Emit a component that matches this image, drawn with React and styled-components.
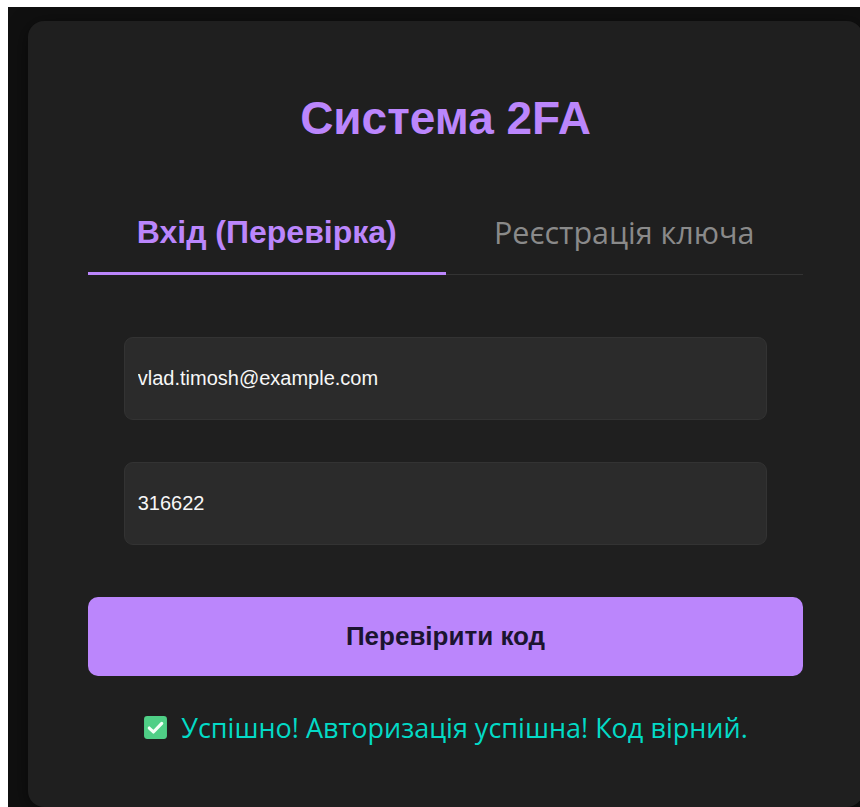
import React, { useState } from "react";
import styled, { createGlobalStyle } from "styled-components";

const GlobalStyle = createGlobalStyle`
  html, body {
    background: #ffffff;
  }
  body {
    margin: 7px 0 0 8px;
    overflow: hidden;
  }
  * {
    box-sizing: border-box;
  }
`;

const Backdrop = styled.div`
  background: #101010;
  min-height: 800px;
  padding: 14px 0 0 20px;
`;

const Card = styled.div`
  width: 835px;
  height: 786px;
  background: #1f1f1f;
  border-radius: 16px;
  box-shadow: 0 4px 20px rgba(0, 0, 0, 0.5);
  padding: 70px 60px 0;
  display: flex;
  flex-direction: column;
  align-items: center;
  font-family: "Liberation Sans", Arial, sans-serif;
`;

const Title = styled.h1`
  margin: 0;
  font-size: 46px;
  line-height: 55px;
  font-weight: 700;
  color: #bb86fc;
`;

const Tabs = styled.div`
  display: flex;
  width: 100%;
  margin-top: 56px;
  border-bottom: 1px solid #333;
`;

const Tab = styled.button`
  flex: 1;
  background: none;
  border: none;
  border-bottom: 3px solid ${(p) => (p.$active ? "#bb86fc" : "transparent")};
  margin-bottom: -1px;
  padding: 11px 0 21px;
  font-family: ${(p) =>
    p.$active ? '"Liberation Sans", Arial, sans-serif' : '"Open Sans", sans-serif'};
  font-size: ${(p) => (p.$active ? "32px" : "30.5px")};
  line-height: 38px;
  font-weight: ${(p) => (p.$active ? 700 : 400)};
  color: ${(p) => (p.$active ? "#bb86fc" : "#8a8a8a")};
  cursor: pointer;
`;

const Form = styled.form`
  width: 100%;
  margin-top: 62px;
  display: flex;
  flex-direction: column;
  align-items: center;
`;

const Input = styled.input`
  width: 90%;
  height: 83px;
  margin-bottom: ${(p) => p.$gap}px;
  padding: 0 13px;
  background: #2b2b2b;
  border: 1px solid #333;
  border-radius: 9px;
  color: #f7f7f7;
  font-family: "Liberation Sans", Arial, sans-serif;
  font-size: 20px;
  outline: none;
`;

const Submit = styled.button`
  width: 100%;
  height: 79px;
  border: none;
  border-radius: 10px;
  background: #bb86fc;
  color: #1b1430;
  font-family: "Liberation Sans", Arial, sans-serif;
  font-size: 26px;
  font-weight: 700;
  cursor: pointer;
`;

const Message = styled.div`
  margin-top: 33px;
  display: flex;
  align-items: center;
  gap: 13px;
  font-family: "Open Sans", sans-serif;
  font-size: 27px;
  color: #03dac6;
`;

const CheckBadge = () => (
  <svg width="25" height="25" viewBox="0 0 24 24">
    <rect x="1" y="1" width="22" height="22" rx="3" fill="#4fcf86" />
    <path
      d="M6 12.5l4 3.8 8-8.3"
      fill="none"
      stroke="#f2fff6"
      strokeWidth="3"
      strokeLinecap="round"
      strokeLinejoin="round"
    />
  </svg>
);

export default function App() {
  const [tab, setTab] = useState("login");

  return (
    <>
      <GlobalStyle />
      <Backdrop>
        <Card>
          <Title>Система 2FA</Title>
          <Tabs>
            <Tab $active={tab === "login"} onClick={() => setTab("login")}>
              Вхід (Перевірка)
            </Tab>
            <Tab $active={tab === "register"} onClick={() => setTab("register")}>
              Реєстрація ключа
            </Tab>
          </Tabs>
          <Form onSubmit={(e) => e.preventDefault()}>
            <Input $gap={42} type="email" defaultValue="vlad.timosh@example.com" />
            <Input $gap={52} type="text" defaultValue="316622" />
            <Submit type="submit">Перевірити код</Submit>
          </Form>
          <Message>
            <CheckBadge />
            Успішно! Авторизація успішна! Код вірний.
          </Message>
        </Card>
      </Backdrop>
    </>
  );
}
